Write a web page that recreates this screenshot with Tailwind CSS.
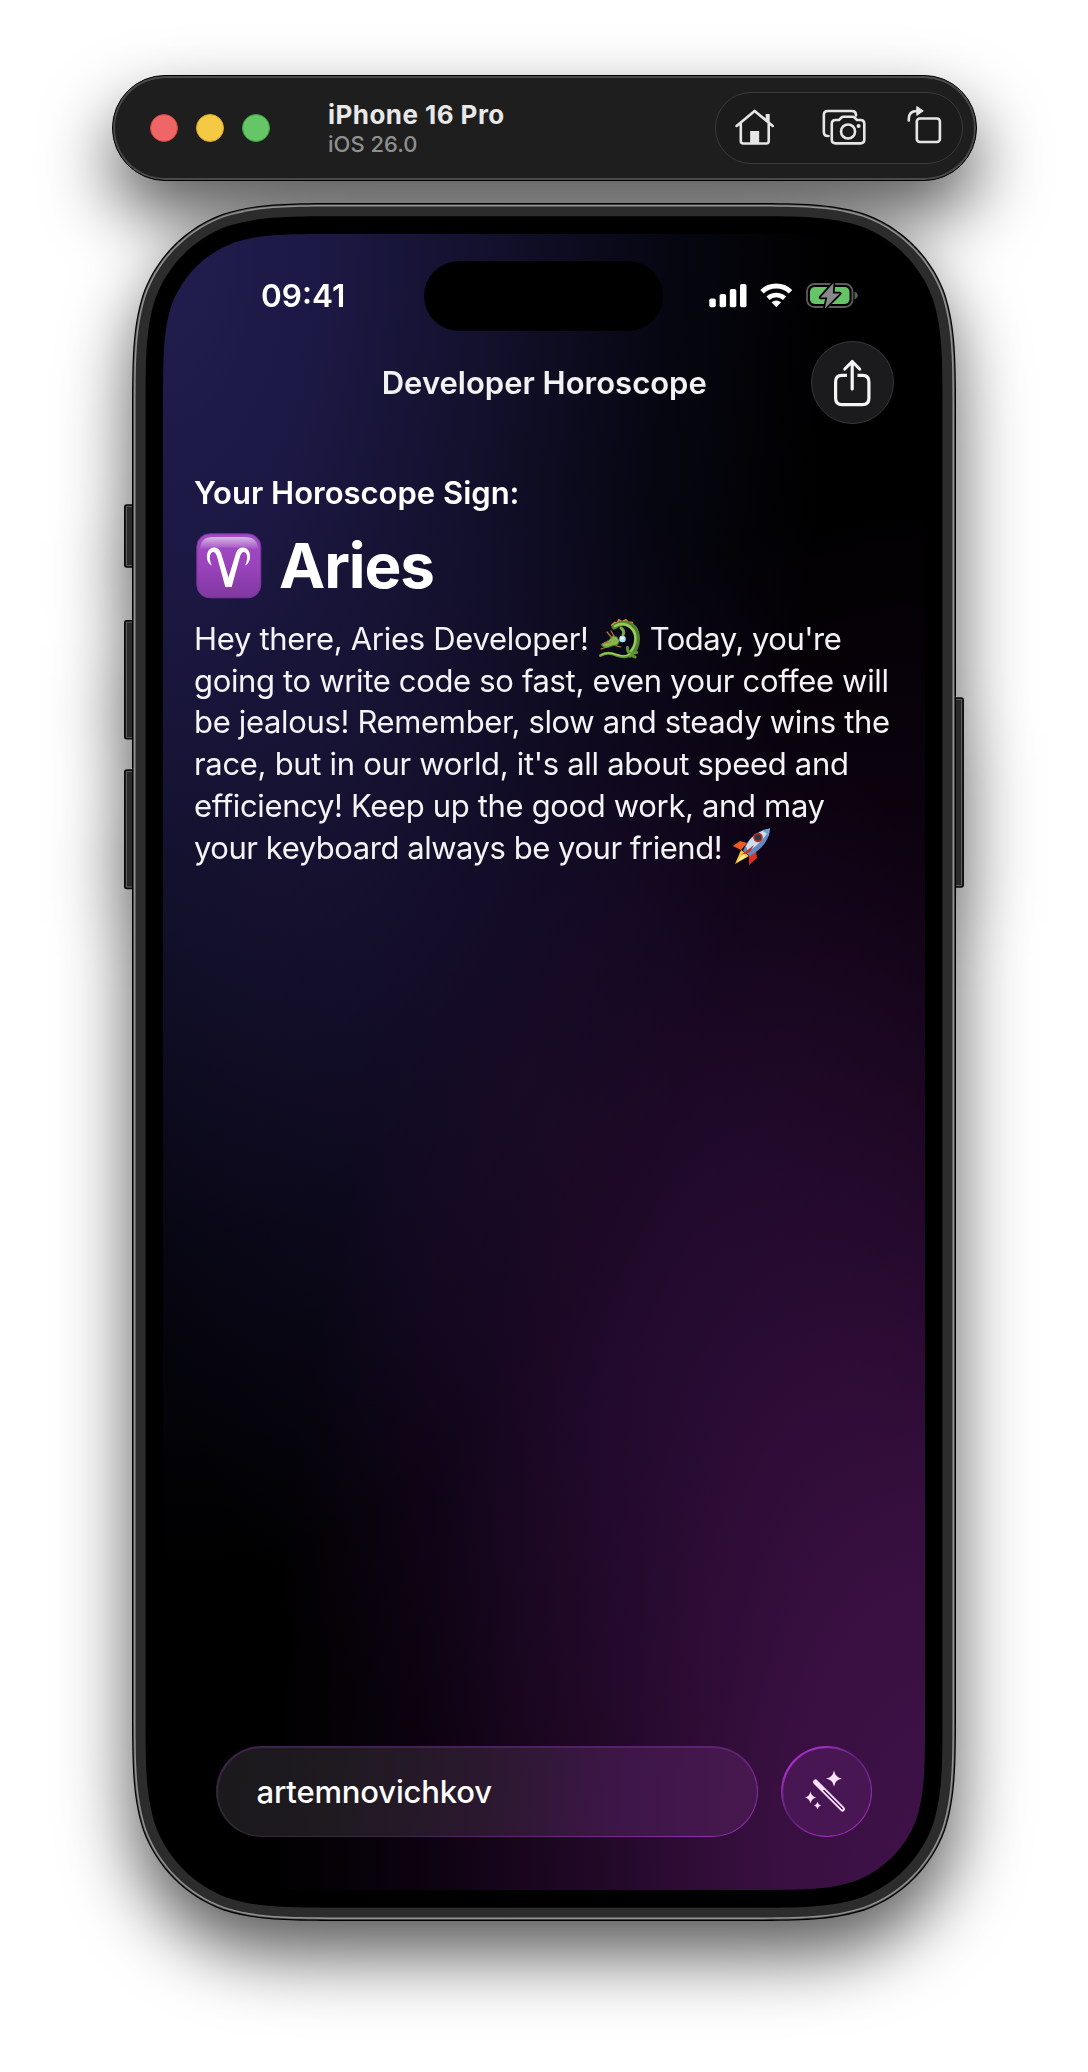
<!DOCTYPE html>
<html lang="en">
<head>
<meta charset="utf-8">
<title>iPhone 16 Pro</title>
<script src="https://cdn.jsdelivr.net/npm/@tailwindcss/browser@4"></script>
</head>
<body class="bg-white font-['Inter',sans-serif]">
<div class="flex w-[1088px] h-[2072px] flex-col pt-[75px] overflow-hidden drop-shadow-[0_34px_35px_rgba(0,0,0,0.65)]">

  <!-- Simulator toolbar -->
  <header class="ml-[112px] flex h-[106px] w-[865px] items-center rounded-[53px] border border-black bg-[#1e1e1e] pl-[37px] pr-[13px] shadow-[inset_0_0_0_2px_#4a4a4a,inset_0_2px_0_0_#6b6f6b]">
    <div class="flex gap-[18px]">
      <span class="size-7 rounded-full border border-[#d9403f] bg-[#ee6665]"></span>
      <span class="size-7 rounded-full border border-[#dba724] bg-[#f4ca45]"></span>
      <span class="size-7 rounded-full border border-[#3ba63c] bg-[#66c566]"></span>
    </div>
    <div class="mt-[2px] ml-[58px] flex flex-col">
      <span class="self-start whitespace-nowrap text-[26px] leading-[30px] font-bold tracking-[0.45px] text-[#e8e8e8]">iPhone 16 Pro</span>
      <span class="self-start whitespace-nowrap text-[22px] leading-[28px] font-medium text-[#8f8f8f]">iOS 26.0</span>
    </div>
    <div class="ml-auto flex h-[72px] w-[248px] items-center rounded-full border-[1.5px] border-[#3a3a3a] bg-[#1b1b1b]">
      <svg class="w-full h-full" viewBox="716 94 245 69" fill="none" stroke="#e6e6e6" stroke-width="2.6" stroke-linecap="round" stroke-linejoin="round">
        <path d="M736.5 126.5 754.5 111.5 772.5 126.5M740.7 124V141.5Q740.7 144 743.2 144H766Q768.5 144 768.5 141.5V124"/>
        <path d="M765.5 114.5h4v8.500l-4-3.500z" fill="#e6e6e6" stroke="none"/>
        <path d="M750 131.5h9v12h-9z" fill="#e6e6e6" stroke="none"/>
        <path d="M828 136.500h-.6q-4 0-4-4v-17q0-4 4-4h24q4 0 4 4v.5"/>
        <path d="M835 120.500h3.500l2.200-2.200q1-1 2.500-1h8.500q1.500 0 2.500 1l2.200 2.200h3.500q3.800 0 3.800 3.800v15.700q0 3.800-3.800 3.800h-24.800q-3.800 0-3.800-3.800v-15.700q0-3.800 3.800-3.800z"/>
        <circle cx="847.500" cy="132" r="7"/>
        <circle cx="858" cy="126.500" r="2" fill="#e6e6e6" stroke="none"/>
        <rect x="916" y="119" width="23" height="23.500" rx="3"/>
        <path d="M908 121v-1.500q0-8 8-8h1"/>
        <path d="M916 107.200v8.600l6.300-4.300z" fill="#e6e6e6" stroke-width="1"/>
      </svg>
    </div>
  </header>

  <!-- Device -->
  <div class="relative mt-[22px] ml-[124px] h-[1718px] w-[840px]">
    <svg class="absolute inset-0" width="840" height="1718" viewBox="124 203 840 1718" fill="none">
      <g fill="#2d2d2d" stroke="#0a0a0a" stroke-width="1.500">
        <rect x="124.700" y="505" width="20" height="62" rx="2"/>
        <rect x="124.700" y="620.700" width="20" height="118" rx="2"/>
        <rect x="124.700" y="770" width="20" height="118.500" rx="2"/>
        <rect x="943" y="698" width="20.200" height="189" rx="2"/>
      </g>
      <g fill="#2a2a2a" stroke="#5c5c5c">
        <path d="M133 506.500h-6.500v59h6.500M133 622.200h-6.500v115.500h6.500M133 771.500h-6.500v115.500h6.500M955 699.500h6.500v186h-6.500"/>
      </g>
      <path data-squircle="132,203,824,1718,144" fill="#000"/>
      <path data-squircle="133.200,204.200,821.600,1715.600,142.800" fill="#555"/>
      <path data-squircle="134,205,820,1714,142" fill="#929292"/>
      <path data-squircle="135.500,206.500,817,1711,140.500" fill="#2c2c2c"/>
      <path data-squircle="145.500,216.300,797,1691.400,130.500" fill="#000"/>
    </svg>

    <!-- Screen -->
    <main data-clip="762,1656,113" class="absolute top-[31px] left-[39px] flex h-[1656px] w-[762px] flex-col bg-black bg-[radial-gradient(ellipse_670px_1340px_at_0%_0%,#211d4e_0%,#1c1844_25%,#12102b_50%,#060611_76%,#000000_100%),radial-gradient(ellipse_660px_1400px_at_100%_100%,#3f1249_0%,#370f3f_25%,#210827_50%,#0b020e_78%,#000000_100%),radial-gradient(ellipse_400px_640px_at_50%_54%,#0c0511_0%,#090410_40%,#000000_100%)] bg-blend-screen text-white">
      <!-- Status bar -->
      <div class="flex h-[123px] items-center pt-[0px] pl-[98px]">
        <span class="mt-[1px] w-[162.500px] whitespace-nowrap text-[31.500px] font-semibold">09:41</span>
        <div class="h-[70px] w-[239px] rounded-full bg-black"></div>
        <svg class="ml-[44.500px]" width="152" height="30" viewBox="707 281 152 30" fill="#fff">
          <rect x="709.300" y="298.500" width="6.500" height="8.700" rx="1.800"/>
          <rect x="719.600" y="294" width="6.500" height="13.200" rx="1.800"/>
          <rect x="729.800" y="289" width="6.500" height="18.200" rx="1.800"/>
          <rect x="740" y="284" width="6.500" height="23.200" rx="1.800"/>
          <g fill="none" stroke="#fff" stroke-width="5">
            <path d="M762 291.800a20.500 20.500 0 0 1 28.500 0"/>
            <path d="M768 298.200a12.300 12.300 0 0 1 16.500 0" stroke-width="4.600"/>
          </g>
          <path d="M771.500 302.300q4.800-3.600 9.600 0L776.300 307.300z"/>
          <rect x="807" y="284" width="45.500" height="23" rx="7.500" fill="none" stroke="#5c5c5e" stroke-width="1.800"/>
          <path d="M854.500 291.700q3.300 1 3.300 3.800t-3.300 3.800z" fill="#5c5c5e"/>
          <rect x="810" y="287" width="39.500" height="17" rx="4.800" fill="#66c466"/>
          <path d="M833.500 283 820.500 297.500h6.800L824.800 308.500 839.800 293.500h-7z" fill="#88888c" stroke="#000" stroke-width="3.500" stroke-linejoin="round" paint-order="stroke"/>
        </svg>
      </div>

      <!-- Navigation bar -->
      <div class="flex h-[51px] items-center justify-between pr-[30.500px] pl-[114px]">
        <span></span>
        <h1 class="mt-[2px] whitespace-nowrap text-[31px] font-semibold text-[#f2f2f2]">Developer Horoscope</h1>
        <div class="flex size-[83px] items-center justify-center rounded-full border-[1.500px] border-[#37363a] bg-[#1b1a1d]">
          <svg width="42" height="50" viewBox="832 357 42 50" fill="none" stroke="#f5f5f5" stroke-width="3.200" stroke-linecap="round" stroke-linejoin="round">
            <path d="M852.200 388V361M844.800 368 852.200 360.500 859.600 368"/>
            <path stroke-linecap="butt" d="M847 374.300h-5q-6.400 0-6.400 6.400v16.500q0 6.400 6.400 6.400h20.500q6.400 0 6.400-6.400v-16.500q0-6.400-6.400-6.400h-5"/>
          </svg>
        </div>
      </div>

      <!-- Horoscope -->
      <section class="flex flex-col items-start pt-[65px] pl-[31px]">
        <h2 class="whitespace-nowrap text-[31px] leading-[40px] font-semibold">Your Horoscope Sign:</h2>
        <div class="mt-[13px] flex h-[80px] items-center gap-[17px]">
          <svg class="ml-[2px]" width="66" height="66" viewBox="0 0 66 66">
            <defs>
              <linearGradient id="tile" x1="0" y1="0" x2="0" y2="1"><stop offset="0" stop-color="#a04cc4"/><stop offset=".5" stop-color="#9a43bd"/><stop offset="1" stop-color="#8038a0"/></linearGradient>
              <linearGradient id="gloss" x1="0" y1="0" x2="0" y2="1"><stop offset="0" stop-color="#fff" stop-opacity=".6"/><stop offset="1" stop-color="#fff" stop-opacity="0"/></linearGradient>
            </defs>
            <rect x=".8" y=".8" width="64" height="64" rx="13" fill="url(#tile)" stroke="#7b3699" stroke-width="1"/>
            <path d="M4 17Q4 4 17 4H49Q62 4 62 17Q55 14.500 33 14.500T4 17z" fill="url(#gloss)"/>
            <path d="M15.800 32.500C11 30.500 9.300 22.500 12.500 17.500C15.500 13 22.500 13 25 20L32.500 44.500L40 20C42.500 13 49.500 13 52.500 17.500C55.700 22.500 54 30.500 49.200 32.500C51.500 27.500 52 22 49.300 19.600C47.300 18 45 20 44 23.500L35.700 54H29.300L21 23.500C20 20 17.700 18 15.700 19.600C13 22 13.500 27.500 15.800 32.500z" fill="#fff"/>
          </svg>
          <span class="whitespace-nowrap text-[62px] leading-[80px] font-bold tracking-[-1.100px]">Aries</span>
        </div>
        <div class="mt-[12px] flex flex-col items-start text-[31px] leading-[41.700px] tracking-[-0.340px] text-[#f4f4f6] whitespace-nowrap">
          <div class="flex items-center"><span class="tracking-[-0.300px]">Hey there, Aries Developer!</span>
            <svg class="mx-[10px]" width="41" height="40" viewBox="0 0 41 40" fill="none" stroke-linecap="round" stroke-linejoin="round">
              <path d="M13 6 16 3.500 18 5 20 1 23 3 27 1 29 3.500 33 3.500 34 6.500 37 9" stroke="#d08432" stroke-width="2"/>
              <path d="M15 8Q20 4 26 4.500Q38 6 38.500 19Q38.500 30 31 36" stroke="#4f8330" stroke-width="5"/>
              <path d="M16 7Q22 3.500 28 6Q36.500 10 36.500 20Q36 28 31 33" stroke="#9bcb57" stroke-width="2.600"/>
              <path d="M1.500 36.500Q9 32.500 17 36Q27 39.500 32 35.500Q28 33 28.500 28.500M31 34.500 37.500 33.500M32 36 36 38" stroke="#5f9436" stroke-width="3"/>
              <path d="M2 36Q9 32 17 35.500Q26 38.500 31 35" stroke="#a3cf5c" stroke-width="1.400"/>
              <path d="M2.500 25.500 10 21 14 16.500 18 18 20.500 22 18.500 26 13 27 9 28.500 4.500 28z" fill="#86b548" stroke="#3d6a2a" stroke-width="1"/>
              <path d="M4 24.500 12 22.500M13 19 8 13M15 17 12 12M2 30 8 28M17 27 22 28" stroke="#b87a3a" stroke-width="1.200"/>
              <path d="M22 9Q26 12 24 16" stroke="#7aad43" stroke-width="3"/>
              <circle cx="23.500" cy="20" r="3.300" fill="#aee0f8"/><circle cx="23" cy="19.300" r="1.500" fill="#fff"/>
            </svg><span class="tracking-[-0.500px]">Today, you're</span></div>
          <div>going to write code so fast, even your coffee will</div>
          <div>be jealous! Remember, slow and steady wins the</div>
          <div class="tracking-[-0.310px]">race, but in our world, it's all about speed and</div>
          <div>efficiency! Keep up the good work, and may</div>
          <div class="flex items-center"><span class="tracking-[-0.460px]">your keyboard always be your friend!</span>
            <svg class="ml-[10px]" width="40" height="40" viewBox="0 0 40 40">
              <path d="M15 16 8 14 1 19 9 23z" fill="#ee5b22"/>
              <path d="M24 24 25 31 17 38 17 28z" fill="#dc2f22"/>
              <path d="M9 23 3 37 17 29z" fill="#ffc52f"/><path d="M11 27 5 35 14 30z" fill="#fff3a0"/>
              <path d="M11 24Q18 5 38 1.500Q37 18 18 29z" fill="#5f8cc0"/>
              <path d="M14 19Q21 5 38 1.500Q32 14 16 25z" fill="#cfdde9"/>
              <path d="M30 3.500Q34.500 5.500 36.500 9L38 1.500z" fill="#6d9fd6"/>
              <path d="M22 18 9 28 18 25z" fill="#c92c28"/>
              <circle cx="26" cy="10.500" r="4.800" fill="#b62d26"/><circle cx="26" cy="10.500" r="3" fill="#2c3646"/>
            </svg></div>
        </div>
      </section>

      <!-- Input -->
      <div class="mt-auto mb-[53px] ml-[53px] flex gap-[23px]">
        <div class="rounded-full bg-[linear-gradient(to_bottom,#4a1c5aaa_0%,#4a1c5a00_80%),linear-gradient(100deg,#2c2930_0%,#3c2742_35%,#68287a_65%,#9a2fb4_100%)] p-[1.500px]">
          <div class="flex h-[88px] w-[539px] items-center rounded-full bg-[linear-gradient(95deg,#1a191b_0%,#1e1a20_20%,#2b182f_50%,#3e1649_75%,#47184f_100%)] pt-[2px] pl-[39px]">
            <span class="whitespace-nowrap text-[31px] font-medium tracking-[-0.160px]">artemnovichkov</span>
          </div>
        </div>
        <div class="rounded-full bg-[conic-gradient(from_45deg,#60227a_0deg,#a22fc2_60deg,#a22fc2_140deg,#5a2070_190deg,#a22fc2_250deg,#a22fc2_310deg,#60227a_360deg)] p-[1.500px]">
          <div class="flex size-[88px] items-center justify-center rounded-full bg-[#481653]">
            <svg width="44" height="44" viewBox="805 1769.500 44 44" fill="#fbe3ff">
              <path d="M834 1770q1.300 7 8 8-6.700 1-8 8-1.300-7-8-8 6.700-1 8-8zM810.500 1791q1 5 5.700 6-4.700 1-5.700 6-1-5-5.700-6 4.700-1 5.700-6zM817.500 1801q.7 3.300 3.800 4-3.100.7-3.800 4-.7-3.300-3.800-4 3.100-.7 3.800-4z"/>
              <path d="M815.500 1781.500 842.500 1808.500" stroke="#fbe3ff" stroke-width="5" stroke-linecap="round"/>
              <path d="M824 1790 842.300 1808.300" stroke="#481653" stroke-width="1.500" stroke-linecap="round"/>
            </svg>
          </div>
        </div>
      </div>
    </main>
  </div>
</div>
<script>
  // Continuous-curvature rounded rectangle
  function squircle(x, y, w, h, r) {
    const a = 1.52866 * r, b = 1.08849 * r, c = 0.86841 * r, d = 0.63149 * r, e = 0.07491 * r, f = 0.37282 * r, g = 0.16906 * r;
    const X = x + w, Y = y + h;
    return `M${x + a} ${y}L${X - a} ${y}C${X - b} ${y} ${X - c} ${y} ${X - d} ${y + e}C${X - f} ${y + g} ${X - g} ${y + f} ${X - e} ${y + d}C${X} ${y + c} ${X} ${y + b} ${X} ${y + a}`
      + `L${X} ${Y - a}C${X} ${Y - b} ${X} ${Y - c} ${X - e} ${Y - d}C${X - g} ${Y - f} ${X - f} ${Y - g} ${X - d} ${Y - e}C${X - c} ${Y} ${X - b} ${Y} ${X - a} ${Y}`
      + `L${x + a} ${Y}C${x + b} ${Y} ${x + c} ${Y} ${x + d} ${Y - e}C${x + f} ${Y - g} ${x + g} ${Y - f} ${x + e} ${Y - d}C${x} ${Y - c} ${x} ${Y - b} ${x} ${Y - a}`
      + `L${x} ${y + a}C${x} ${y + b} ${x} ${y + c} ${x + e} ${y + d}C${x + g} ${y + f} ${x + f} ${y + g} ${x + d} ${y + e}C${x + c} ${y} ${x + b} ${y} ${x + a} ${y}Z`;
  }
  document.querySelectorAll('[data-squircle]').forEach(p => p.setAttribute('d', squircle(...p.dataset.squircle.split(',').map(Number))));
  document.querySelectorAll('[data-clip]').forEach(el => {
    el.style.clipPath = `path('${squircle(0, 0, ...el.dataset.clip.split(',').map(Number))}')`;
  });
</script>
</body>
</html>
